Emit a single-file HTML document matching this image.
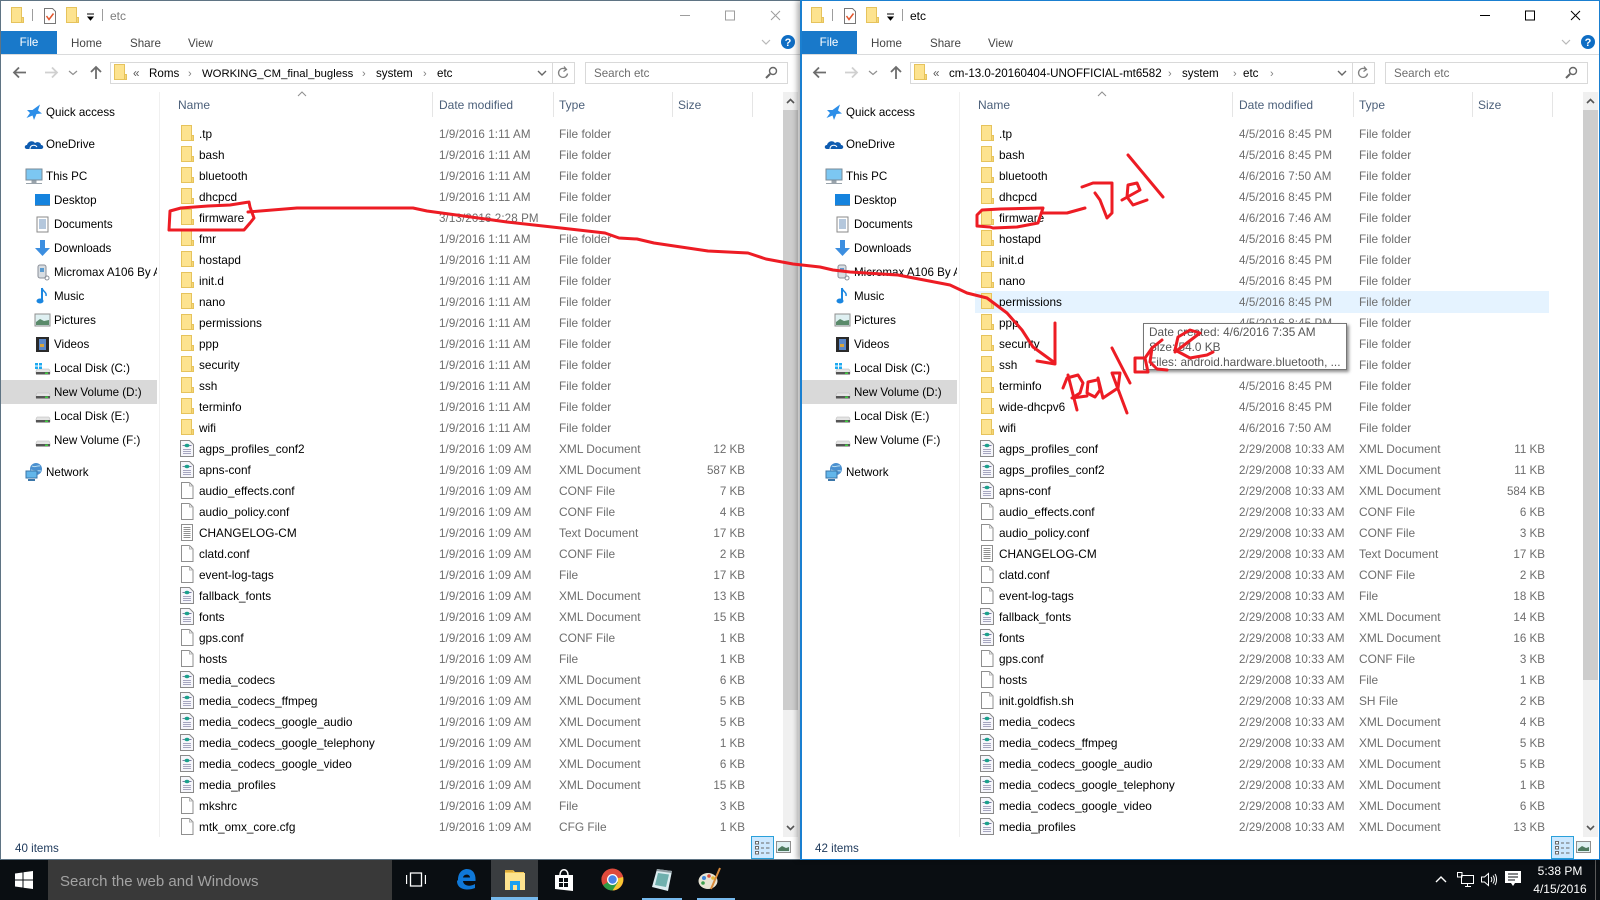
<!DOCTYPE html>
<html><head><meta charset="utf-8"><title>etc</title>
<style>
html,body{margin:0;padding:0;width:1600px;height:900px;overflow:hidden;background:#0a0e12}
body{font-family:"Liberation Sans",sans-serif;font-size:11.6px;color:#000;position:relative}
.win{position:absolute;top:0;width:800px;height:860px;background:#fff;overflow:hidden;box-sizing:border-box;z-index:1}
#L{left:0;border:1px solid #5f7484;border-right:0}
#R{left:800px;border:1px solid #1a7fd0;border-left-width:2px;box-shadow:-3px 0 5px rgba(0,0,0,.3)}
.in{position:absolute;left:-1px;top:-1px;width:800px;height:860px}
#R .in{left:-2px}
.a{position:absolute;white-space:nowrap;line-height:16px}
svg.a{display:block;overflow:visible}
.tab{top:36px}
.file{position:absolute;left:1px;top:31px;width:56px;height:23px;background:#1979ca;color:#fff;text-align:center;line-height:24px}
.rib{position:absolute;left:0;top:54px;width:800px;height:1px;background:#dadbdc}
.box{position:absolute;top:62px;height:20px;border:1px solid #d9d9d9;background:#fff}
.crumb{top:66px}
.sep{color:#808080;font-size:11px}
.hd{top:97px;color:#4c607a;font-size:12px}
.vl{position:absolute;top:92px;height:25px;width:1px;background:#e5e5e5}
.list{position:absolute;left:160px;top:125px;width:620px}
.r{position:relative;height:21px;line-height:20px;white-space:nowrap}
.r svg{position:absolute;left:19px;top:0;width:16px;height:17px}
.r span{position:absolute;top:0}
.nm{left:39px;font-size:11.8px}
.dt{left:279px;color:#6d6d6d;letter-spacing:.1px}
.ty{left:399px;color:#6d6d6d;font-size:11.9px}
.r .nm,.r .ty{top:-1px}
.sz{left:500px;width:85px;text-align:right;color:#6d6d6d}
.nav{position:absolute;left:1px;width:156px;height:24px;line-height:24px;white-space:nowrap;overflow:hidden}
.nav svg{position:absolute;top:2px;width:20px;height:20px}
.nav b{font-weight:normal;position:absolute;top:1px}
.t1 svg{left:23px}.t1 b{left:45px}
.t2 svg{left:31px}.t2 b{left:53px}
.sb{position:absolute;left:783px;top:92px;width:15px;height:745px;background:#f0f0f0}
.th{position:absolute;left:0;top:18px;width:15px;background:#cdcdcd}
.st{position:absolute;left:15px;top:841px;color:#1e395b;line-height:16px}
.vw{position:absolute;left:751px;top:836px;width:21px;height:21px;background:#cce8ff;border:1px solid #2aa0da}
#tb{position:absolute;left:0;top:859px;width:1600px;height:41px;background:#0a0e12}
#tb svg{position:absolute}
.srch{position:absolute;left:48px;top:0;width:344px;height:41px;background:#393939;color:#a3a3a3;font-size:15px;line-height:45px;padding-left:12px;box-sizing:border-box}
.tip{position:absolute;left:1143px;top:323px;width:204px;height:47px;background:#fff;border:1px solid #767676;box-shadow:2px 2px 3px rgba(0,0,0,.45);color:#575757;line-height:15px;padding:1px 0 0 5px;box-sizing:border-box;white-space:nowrap;overflow:hidden;z-index:2;font-size:11.8px}
#ink{position:absolute;left:0;top:0;width:1600px;height:900px;pointer-events:none;z-index:3}
#ink polyline{fill:none;stroke:#ed1c24;stroke-width:3;stroke-linejoin:round;stroke-linecap:round}
</style></head><body>
<svg width="0" height="0" style="position:absolute">
<defs>
<symbol id="f" viewBox="0 0 16 17"><path d="M2.500.5H12.500V15.500H2.500Z" fill="#fde38f" stroke="#e6c35c"/><path d="M12.500 10.500H14.500V15.500H12.500Z" fill="#f6d677" stroke="#e6c35c"/></symbol>
<symbol id="x" viewBox="0 0 16 17"><path d="M1.500.5H10.500L14.500 4.500V16.500H1.500Z" fill="#f6f6fb" stroke="#8a8a8a"/><path d="M3.500 5.500H5.500M10.500 5.500H12.500" stroke="#7a7aa0"/><ellipse cx="8" cy="5.500" rx="2.500" ry="1.800" fill="#1aa08c"/><path d="M4 9.500H12M4 11.500H12M4 13.500H12" stroke="#a6a6c0"/></symbol>
<symbol id="p" viewBox="0 0 16 17"><path d="M2.500.5H10.500L14 4V16.500H2.500Z" fill="#fff" stroke="#8f8f8f"/><path d="M10.500.5V4H14" fill="none" stroke="#b5b5b5"/></symbol>
<symbol id="t" viewBox="0 0 16 17"><path d="M2.500.5H13.500V16.500H2.500Z" fill="#fff" stroke="#8f8f8f"/><path d="M4.500 3.500H11.500M4.500 5.500H11.500M4.500 7.500H11.500M4.500 9.500H11.500M4.500 11.500H11.500M4.500 13.500H11.500" stroke="#8f8f8f"/></symbol>
<symbol id="star" viewBox="0 0 20 20"><path d="M16 2.500 14 8.500 18 11.500 12.500 12 10 18 8.500 13.500 2.500 16 6 11 3 8 8.500 8Z" fill="#2c8ee8"/></symbol>
<symbol id="cloud" viewBox="0 0 20 20"><path d="M3 15C0 15 0 11 3 11 4 7 9 6 11 9 14 7 17 9 17 11 20 11 20 15 17 15Z" fill="#0f5cb0"/><path d="M6 15C6 11 11 10 13 13" stroke="#fff" fill="none"/></symbol>
<symbol id="pc" viewBox="0 0 20 20"><rect x="2" y="3" width="16" height="11" fill="#7cc7f2" stroke="#7a8a96"/><path d="M8 15H12V17H8ZM2 17.500H18" stroke="#9aa4ac" fill="#9aa4ac"/></symbol>
<symbol id="desk" viewBox="0 0 20 20"><rect x="3" y="4" width="15" height="11" fill="#1583de"/><path d="M3 15.500H18" stroke="#7a8a96"/></symbol>
<symbol id="doc" viewBox="0 0 20 20"><rect x="5" y="3" width="11" height="15" fill="#fff" stroke="#8a8a8a"/><path d="M7 6H14M7 8H14M7 10H14M7 12H14M7 14H14" stroke="#6a8fb8"/></symbol>
<symbol id="dl" viewBox="0 0 20 20"><path d="M8 2H13V10H18L10.500 18 3 10H8Z" fill="#3c8ee0"/></symbol>
<symbol id="ph" viewBox="0 0 20 20"><rect x="6" y="3" width="8" height="13" rx="2" fill="#d8dde2" stroke="#8a8f98"/><rect x="8" y="6" width="4" height="4" fill="#5a9bd0"/><circle cx="15" cy="16" r="2" fill="none" stroke="#8a8f98"/></symbol>
<symbol id="mus" viewBox="0 0 20 20"><path d="M10 2V14" stroke="#1a86e0" stroke-width="2"/><path d="M10 2C11 6 15 6 14 10" stroke="#1a86e0" fill="none" stroke-width="1.500"/><ellipse cx="8" cy="15" rx="3.500" ry="2.500" fill="#1a86e0"/></symbol>
<symbol id="pic" viewBox="0 0 20 20"><rect x="3" y="4" width="15" height="12" fill="#dff0f2" stroke="#8f8f8f"/><path d="M4 12 8 9 12 11 17 10V15H4Z" fill="#5a8a6a"/></symbol>
<symbol id="vid" viewBox="0 0 20 20"><rect x="4" y="3" width="13" height="15" fill="#2a2a2a"/><rect x="7" y="5" width="7" height="11" fill="#5a88c8"/><rect x="8" y="10" width="4" height="3" fill="#d9a53a"/></symbol>
<symbol id="drv" viewBox="0 0 20 20"><path d="M5 11H17L18 13V16H4V13Z" fill="#e4e4e4" stroke="#b5b5b5" stroke-width=".5"/><rect x="4" y="14" width="14" height="2.500" fill="#555"/><rect x="13" y="14.500" width="3" height="1.500" fill="#3ecf3e"/></symbol>
<symbol id="drw" viewBox="0 0 20 20"><use href="#drv"/><path d="M3 5H6V7.500H3ZM7 5H10V7.500H7ZM3 8.500H6V11H3ZM7 8.500H10V11H7Z" fill="#1eaaf0"/></symbol>
<symbol id="net" viewBox="0 0 20 20"><circle cx="12" cy="7" r="6" fill="#4a90d0"/><path d="M8 4C11 6 14 3 16 4M7 8C11 10 14 8 17 9" stroke="#b9dff2" fill="none"/><rect x="2" y="9" width="11" height="7" fill="#62b6ea" stroke="#3a76a8"/><path d="M4 18H11" stroke="#3a76a8" stroke-width="2"/></symbol>
<symbol id="chk" viewBox="0 0 14 17"><path d="M1.500.5H9.500L12.500 3.500V15.500H1.500Z" fill="#fff" stroke="#777"/><path d="M3.500 8 6 11.500 10.500 5.500" fill="none" stroke="#e2552c" stroke-width="1.500"/></symbol>
</defs></svg>

<div class="win" id="L"><div class="in">
<svg class="a" style="left:9px;top:7px" width="16" height="17"><use href="#f"/></svg>
<div class="a" style="left:32px;top:9px;width:1px;height:12px;background:#9d9d9d"></div>
<svg class="a" style="left:43px;top:8px" width="14" height="17"><use href="#chk"/></svg>
<svg class="a" style="left:64px;top:7px" width="16" height="17"><use href="#f"/></svg>
<svg class="a" style="left:87px;top:14px" width="8" height="7"><path d="M0 0H7M1 3H6L3.500 6Z" stroke="#000" fill="#000"/></svg>
<div class="a" style="left:102px;top:9px;width:1px;height:12px;background:#9d9d9d"></div>
<div class="a" style="left:110px;top:8px;color:#7c7c7c;font-size:12px">etc</div>
<svg class="a" style="left:680px;top:10px" width="110" height="12"><path d="M0 5.500H10" stroke="#9d9d9d"/><rect x="45.500" y="1" width="9" height="9" fill="none" stroke="#9d9d9d"/><path d="M91 1 100 10M100 1 91 10" stroke="#9d9d9d"/></svg>
<div class="file">File</div>
<div class="a tab" style="left:71px;color:#444">Home</div><div class="a tab" style="left:130px;color:#444">Share</div><div class="a tab" style="left:188px;color:#444">View</div>
<svg class="a" style="left:761px;top:39px" width="10" height="6"><path d="M1 1 5 5 9 1" fill="none" stroke="#b8b8b8" stroke-width="1.200"/></svg>
<svg class="a" style="left:781px;top:35px" width="14" height="14"><circle cx="7" cy="7" r="7" fill="#0e6dc4"/><text x="7" y="11" font-size="11" font-weight="bold" text-anchor="middle" fill="#fff" font-family="Liberation Sans">?</text></svg>
<div class="rib"></div>
<svg class="a" style="left:13px;top:66px" width="100" height="13"><g fill="none" stroke-width="1.800"><path d="M13 6.500H1M6 1.500 1 6.500 6 11.500" stroke="#6d6d6d"/><path d="M32 6.500H44M39 1.500 44 6.500 39 11.500" stroke="#d0d0d0"/><path d="M56 5 60 8.500 64 5" stroke="#8f8f8f" stroke-width="1.200"/><path d="M83 13V1M78 6 83 1 88 6" stroke="#6d6d6d"/></g></svg>
<div class="box" style="left:110px;width:463px"></div>
<div class="a" style="left:552px;top:63px;width:1px;height:20px;background:#d9d9d9"></div>
<svg class="a" style="left:112px;top:64px" width="16" height="17"><use href="#f"/></svg>
<div class="a crumb" style="left:133px;color:#555">«</div>
<div class="a crumb" style="left:149px">Roms</div><div class="a crumb sep" style="left:188px">›</div>
<div class="a crumb" style="left:202px;font-size:11.3px">WORKING_CM_final_bugless</div><div class="a crumb sep" style="left:362px">›</div>
<div class="a crumb" style="left:376px">system</div><div class="a crumb sep" style="left:423px">›</div>
<div class="a crumb" style="left:437px">etc</div>
<svg class="a" style="left:537px;top:70px" width="10" height="6"><path d="M1 1 5 5 9 1" fill="none" stroke="#666" stroke-width="1.400"/></svg>
<svg class="a" style="left:557px;top:66px" width="12" height="13"><path d="M9.500 4A4.500 4.500 0 1 0 10.500 7.500M7 .5 9.500 3.500 6.500 5.500" fill="none" stroke="#808080" stroke-width="1.300"/></svg>
<div class="box" style="left:585px;width:201px"></div>
<div class="a crumb" style="left:594px;color:#6d6d6d">Search etc</div>
<svg class="a" style="left:765px;top:66px" width="13" height="13"><circle cx="8" cy="5" r="3.500" fill="none" stroke="#666" stroke-width="1.400"/><path d="M5 8 1 12" stroke="#666" stroke-width="2"/></svg>
<div class="a hd" style="left:178px">Name</div><div class="a hd" style="left:439px">Date modified</div><div class="a hd" style="left:559px">Type</div><div class="a hd" style="left:678px">Size</div>
<svg class="a" style="left:297px;top:91px" width="10" height="6"><path d="M1 5 5 1 9 5" fill="none" stroke="#8f8f8f"/></svg>
<div class="vl" style="left:432px"></div><div class="vl" style="left:553px"></div><div class="vl" style="left:672px"></div><div class="vl" style="left:752px"></div>
<div style="position:absolute;left:159px;top:92px;width:1px;height:745px;background:#f0f0f0"></div>
<div style="position:absolute;left:1px;top:380px;width:156px;height:24px;background:#d9d9d9"></div>
<div class="nav t1" style="top:100px"><svg><use href="#star"/></svg><b>Quick access</b></div>
<div class="nav t1" style="top:132px"><svg><use href="#cloud"/></svg><b>OneDrive</b></div>
<div class="nav t1" style="top:164px"><svg><use href="#pc"/></svg><b>This PC</b></div>
<div class="nav t2" style="top:188px"><svg><use href="#desk"/></svg><b>Desktop</b></div>
<div class="nav t2" style="top:212px"><svg><use href="#doc"/></svg><b>Documents</b></div>
<div class="nav t2" style="top:236px"><svg><use href="#dl"/></svg><b>Downloads</b></div>
<div class="nav t2" style="top:260px"><svg><use href="#ph"/></svg><b>Micromax A106 By A</b></div>
<div class="nav t2" style="top:284px"><svg><use href="#mus"/></svg><b>Music</b></div>
<div class="nav t2" style="top:308px"><svg><use href="#pic"/></svg><b>Pictures</b></div>
<div class="nav t2" style="top:332px"><svg><use href="#vid"/></svg><b>Videos</b></div>
<div class="nav t2" style="top:356px"><svg><use href="#drw"/></svg><b>Local Disk (C:)</b></div>
<div class="nav t2" style="top:380px"><svg><use href="#drv"/></svg><b>New Volume (D:)</b></div>
<div class="nav t2" style="top:404px"><svg><use href="#drv"/></svg><b>Local Disk (E:)</b></div>
<div class="nav t2" style="top:428px"><svg><use href="#drv"/></svg><b>New Volume (F:)</b></div>
<div class="nav t1" style="top:460px"><svg><use href="#net"/></svg><b>Network</b></div>
<div class="list">
<div class="r"><svg><use href="#f"/></svg><span class="nm">.tp</span><span class="dt">1/9/2016 1:11 AM</span><span class="ty">File folder</span></div>
<div class="r"><svg><use href="#f"/></svg><span class="nm">bash</span><span class="dt">1/9/2016 1:11 AM</span><span class="ty">File folder</span></div>
<div class="r"><svg><use href="#f"/></svg><span class="nm">bluetooth</span><span class="dt">1/9/2016 1:11 AM</span><span class="ty">File folder</span></div>
<div class="r"><svg><use href="#f"/></svg><span class="nm">dhcpcd</span><span class="dt">1/9/2016 1:11 AM</span><span class="ty">File folder</span></div>
<div class="r"><svg><use href="#f"/></svg><span class="nm">firmware</span><span class="dt">3/13/2016 2:28 PM</span><span class="ty">File folder</span></div>
<div class="r"><svg><use href="#f"/></svg><span class="nm">fmr</span><span class="dt">1/9/2016 1:11 AM</span><span class="ty">File folder</span></div>
<div class="r"><svg><use href="#f"/></svg><span class="nm">hostapd</span><span class="dt">1/9/2016 1:11 AM</span><span class="ty">File folder</span></div>
<div class="r"><svg><use href="#f"/></svg><span class="nm">init.d</span><span class="dt">1/9/2016 1:11 AM</span><span class="ty">File folder</span></div>
<div class="r"><svg><use href="#f"/></svg><span class="nm">nano</span><span class="dt">1/9/2016 1:11 AM</span><span class="ty">File folder</span></div>
<div class="r"><svg><use href="#f"/></svg><span class="nm">permissions</span><span class="dt">1/9/2016 1:11 AM</span><span class="ty">File folder</span></div>
<div class="r"><svg><use href="#f"/></svg><span class="nm">ppp</span><span class="dt">1/9/2016 1:11 AM</span><span class="ty">File folder</span></div>
<div class="r"><svg><use href="#f"/></svg><span class="nm">security</span><span class="dt">1/9/2016 1:11 AM</span><span class="ty">File folder</span></div>
<div class="r"><svg><use href="#f"/></svg><span class="nm">ssh</span><span class="dt">1/9/2016 1:11 AM</span><span class="ty">File folder</span></div>
<div class="r"><svg><use href="#f"/></svg><span class="nm">terminfo</span><span class="dt">1/9/2016 1:11 AM</span><span class="ty">File folder</span></div>
<div class="r"><svg><use href="#f"/></svg><span class="nm">wifi</span><span class="dt">1/9/2016 1:11 AM</span><span class="ty">File folder</span></div>
<div class="r"><svg><use href="#x"/></svg><span class="nm">agps_profiles_conf2</span><span class="dt">1/9/2016 1:09 AM</span><span class="ty">XML Document</span><span class="sz">12 KB</span></div>
<div class="r"><svg><use href="#x"/></svg><span class="nm">apns-conf</span><span class="dt">1/9/2016 1:09 AM</span><span class="ty">XML Document</span><span class="sz">587 KB</span></div>
<div class="r"><svg><use href="#p"/></svg><span class="nm">audio_effects.conf</span><span class="dt">1/9/2016 1:09 AM</span><span class="ty">CONF File</span><span class="sz">7 KB</span></div>
<div class="r"><svg><use href="#p"/></svg><span class="nm">audio_policy.conf</span><span class="dt">1/9/2016 1:09 AM</span><span class="ty">CONF File</span><span class="sz">4 KB</span></div>
<div class="r"><svg><use href="#t"/></svg><span class="nm">CHANGELOG-CM</span><span class="dt">1/9/2016 1:09 AM</span><span class="ty">Text Document</span><span class="sz">17 KB</span></div>
<div class="r"><svg><use href="#p"/></svg><span class="nm">clatd.conf</span><span class="dt">1/9/2016 1:09 AM</span><span class="ty">CONF File</span><span class="sz">2 KB</span></div>
<div class="r"><svg><use href="#p"/></svg><span class="nm">event-log-tags</span><span class="dt">1/9/2016 1:09 AM</span><span class="ty">File</span><span class="sz">17 KB</span></div>
<div class="r"><svg><use href="#x"/></svg><span class="nm">fallback_fonts</span><span class="dt">1/9/2016 1:09 AM</span><span class="ty">XML Document</span><span class="sz">13 KB</span></div>
<div class="r"><svg><use href="#x"/></svg><span class="nm">fonts</span><span class="dt">1/9/2016 1:09 AM</span><span class="ty">XML Document</span><span class="sz">15 KB</span></div>
<div class="r"><svg><use href="#p"/></svg><span class="nm">gps.conf</span><span class="dt">1/9/2016 1:09 AM</span><span class="ty">CONF File</span><span class="sz">1 KB</span></div>
<div class="r"><svg><use href="#p"/></svg><span class="nm">hosts</span><span class="dt">1/9/2016 1:09 AM</span><span class="ty">File</span><span class="sz">1 KB</span></div>
<div class="r"><svg><use href="#x"/></svg><span class="nm">media_codecs</span><span class="dt">1/9/2016 1:09 AM</span><span class="ty">XML Document</span><span class="sz">6 KB</span></div>
<div class="r"><svg><use href="#x"/></svg><span class="nm">media_codecs_ffmpeg</span><span class="dt">1/9/2016 1:09 AM</span><span class="ty">XML Document</span><span class="sz">5 KB</span></div>
<div class="r"><svg><use href="#x"/></svg><span class="nm">media_codecs_google_audio</span><span class="dt">1/9/2016 1:09 AM</span><span class="ty">XML Document</span><span class="sz">5 KB</span></div>
<div class="r"><svg><use href="#x"/></svg><span class="nm">media_codecs_google_telephony</span><span class="dt">1/9/2016 1:09 AM</span><span class="ty">XML Document</span><span class="sz">1 KB</span></div>
<div class="r"><svg><use href="#x"/></svg><span class="nm">media_codecs_google_video</span><span class="dt">1/9/2016 1:09 AM</span><span class="ty">XML Document</span><span class="sz">6 KB</span></div>
<div class="r"><svg><use href="#x"/></svg><span class="nm">media_profiles</span><span class="dt">1/9/2016 1:09 AM</span><span class="ty">XML Document</span><span class="sz">15 KB</span></div>
<div class="r"><svg><use href="#p"/></svg><span class="nm">mkshrc</span><span class="dt">1/9/2016 1:09 AM</span><span class="ty">File</span><span class="sz">3 KB</span></div>
<div class="r"><svg><use href="#p"/></svg><span class="nm">mtk_omx_core.cfg</span><span class="dt">1/9/2016 1:09 AM</span><span class="ty">CFG File</span><span class="sz">1 KB</span></div>
</div>
<div class="sb"><svg class="a" style="left:3px;top:6px" width="9" height="6"><path d="M1 5 4.500 1.500 8 5" fill="none" stroke="#555" stroke-width="1.600"/></svg><div class="th" style="height:600px"></div><svg class="a" style="left:3px;top:733px" width="9" height="6"><path d="M1 1 4.500 4.500 8 1" fill="none" stroke="#555" stroke-width="1.600"/></svg></div>
<div class="st">40 items</div>
<div class="vw"><svg class="a" style="left:3px;top:3px" width="15" height="15"><path d="M.5 1.500H3.500V4H.5ZM.5 6.500H3.500V9H.5ZM.5 11.500H3.500V14H.5ZM6 3H9M11 3H14.500M6 8H9M11 8H14.500M6 13H9M11 13H14.500" fill="#fff" stroke="#6a6a6a"/></svg></div>
<svg class="a" style="left:776px;top:841px" width="15" height="12"><rect x=".5" y=".5" width="14" height="11" fill="#dff0f2" stroke="#8f8f8f"/><path d="M2 8 6 5 10 7 13 6V10H2Z" fill="#4d7a5f"/></svg>
</div></div>

<div class="win" id="R"><div class="in">
<svg class="a" style="left:9px;top:7px" width="16" height="17"><use href="#f"/></svg>
<div class="a" style="left:32px;top:9px;width:1px;height:12px;background:#9d9d9d"></div>
<svg class="a" style="left:43px;top:8px" width="14" height="17"><use href="#chk"/></svg>
<svg class="a" style="left:64px;top:7px" width="16" height="17"><use href="#f"/></svg>
<svg class="a" style="left:87px;top:14px" width="8" height="7"><path d="M0 0H7M1 3H6L3.500 6Z" stroke="#000" fill="#000"/></svg>
<div class="a" style="left:102px;top:9px;width:1px;height:12px;background:#9d9d9d"></div>
<div class="a" style="left:110px;top:8px;color:#000;font-size:12px">etc</div>
<svg class="a" style="left:680px;top:10px" width="110" height="12"><path d="M0 5.500H10" stroke="#000"/><rect x="45.500" y="1" width="9" height="9" fill="none" stroke="#000"/><path d="M91 1 100 10M100 1 91 10" stroke="#000"/></svg>
<div class="file">File</div>
<div class="a tab" style="left:71px;color:#444">Home</div><div class="a tab" style="left:130px;color:#444">Share</div><div class="a tab" style="left:188px;color:#444">View</div>
<svg class="a" style="left:761px;top:39px" width="10" height="6"><path d="M1 1 5 5 9 1" fill="none" stroke="#b8b8b8" stroke-width="1.200"/></svg>
<svg class="a" style="left:781px;top:35px" width="14" height="14"><circle cx="7" cy="7" r="7" fill="#0e6dc4"/><text x="7" y="11" font-size="11" font-weight="bold" text-anchor="middle" fill="#fff" font-family="Liberation Sans">?</text></svg>
<div class="rib"></div>
<svg class="a" style="left:13px;top:66px" width="100" height="13"><g fill="none" stroke-width="1.800"><path d="M13 6.500H1M6 1.500 1 6.500 6 11.500" stroke="#6d6d6d"/><path d="M32 6.500H44M39 1.500 44 6.500 39 11.500" stroke="#d0d0d0"/><path d="M56 5 60 8.500 64 5" stroke="#8f8f8f" stroke-width="1.200"/><path d="M83 13V1M78 6 83 1 88 6" stroke="#6d6d6d"/></g></svg>
<div class="box" style="left:110px;width:463px"></div>
<div class="a" style="left:552px;top:63px;width:1px;height:20px;background:#d9d9d9"></div>
<svg class="a" style="left:112px;top:64px" width="16" height="17"><use href="#f"/></svg>
<div class="a crumb" style="left:133px;color:#555">«</div>
<div class="a crumb" style="left:149px">cm-13.0-20160404-UNOFFICIAL-mt6582</div><div class="a crumb sep" style="left:368px">›</div>
<div class="a crumb" style="left:382px">system</div><div class="a crumb sep" style="left:433px">›</div>
<div class="a crumb" style="left:443px">etc</div><div class="a crumb sep" style="left:470px">›</div>
<svg class="a" style="left:537px;top:70px" width="10" height="6"><path d="M1 1 5 5 9 1" fill="none" stroke="#666" stroke-width="1.400"/></svg>
<svg class="a" style="left:557px;top:66px" width="12" height="13"><path d="M9.500 4A4.500 4.500 0 1 0 10.500 7.500M7 .5 9.500 3.500 6.500 5.500" fill="none" stroke="#808080" stroke-width="1.300"/></svg>
<div class="box" style="left:585px;width:201px"></div>
<div class="a crumb" style="left:594px;color:#6d6d6d">Search etc</div>
<svg class="a" style="left:765px;top:66px" width="13" height="13"><circle cx="8" cy="5" r="3.500" fill="none" stroke="#666" stroke-width="1.400"/><path d="M5 8 1 12" stroke="#666" stroke-width="2"/></svg>
<div class="a hd" style="left:178px">Name</div><div class="a hd" style="left:439px">Date modified</div><div class="a hd" style="left:559px">Type</div><div class="a hd" style="left:678px">Size</div>
<svg class="a" style="left:297px;top:91px" width="10" height="6"><path d="M1 5 5 1 9 5" fill="none" stroke="#8f8f8f"/></svg>
<div class="vl" style="left:432px"></div><div class="vl" style="left:553px"></div><div class="vl" style="left:672px"></div><div class="vl" style="left:752px"></div>
<div style="position:absolute;left:159px;top:92px;width:1px;height:745px;background:#f0f0f0"></div>
<div style="position:absolute;left:1px;top:380px;width:156px;height:24px;background:#d9d9d9"></div>
<div style="position:absolute;left:175px;top:291px;width:574px;height:22px;background:#e5f3ff"></div>
<div class="nav t1" style="top:100px"><svg><use href="#star"/></svg><b>Quick access</b></div>
<div class="nav t1" style="top:132px"><svg><use href="#cloud"/></svg><b>OneDrive</b></div>
<div class="nav t1" style="top:164px"><svg><use href="#pc"/></svg><b>This PC</b></div>
<div class="nav t2" style="top:188px"><svg><use href="#desk"/></svg><b>Desktop</b></div>
<div class="nav t2" style="top:212px"><svg><use href="#doc"/></svg><b>Documents</b></div>
<div class="nav t2" style="top:236px"><svg><use href="#dl"/></svg><b>Downloads</b></div>
<div class="nav t2" style="top:260px"><svg><use href="#ph"/></svg><b>Micromax A106 By A</b></div>
<div class="nav t2" style="top:284px"><svg><use href="#mus"/></svg><b>Music</b></div>
<div class="nav t2" style="top:308px"><svg><use href="#pic"/></svg><b>Pictures</b></div>
<div class="nav t2" style="top:332px"><svg><use href="#vid"/></svg><b>Videos</b></div>
<div class="nav t2" style="top:356px"><svg><use href="#drw"/></svg><b>Local Disk (C:)</b></div>
<div class="nav t2" style="top:380px"><svg><use href="#drv"/></svg><b>New Volume (D:)</b></div>
<div class="nav t2" style="top:404px"><svg><use href="#drv"/></svg><b>Local Disk (E:)</b></div>
<div class="nav t2" style="top:428px"><svg><use href="#drv"/></svg><b>New Volume (F:)</b></div>
<div class="nav t1" style="top:460px"><svg><use href="#net"/></svg><b>Network</b></div>
<div class="list">
<div class="r"><svg><use href="#f"/></svg><span class="nm">.tp</span><span class="dt">4/5/2016 8:45 PM</span><span class="ty">File folder</span></div>
<div class="r"><svg><use href="#f"/></svg><span class="nm">bash</span><span class="dt">4/5/2016 8:45 PM</span><span class="ty">File folder</span></div>
<div class="r"><svg><use href="#f"/></svg><span class="nm">bluetooth</span><span class="dt">4/6/2016 7:50 AM</span><span class="ty">File folder</span></div>
<div class="r"><svg><use href="#f"/></svg><span class="nm">dhcpcd</span><span class="dt">4/5/2016 8:45 PM</span><span class="ty">File folder</span></div>
<div class="r"><svg><use href="#f"/></svg><span class="nm">firmware</span><span class="dt">4/6/2016 7:46 AM</span><span class="ty">File folder</span></div>
<div class="r"><svg><use href="#f"/></svg><span class="nm">hostapd</span><span class="dt">4/5/2016 8:45 PM</span><span class="ty">File folder</span></div>
<div class="r"><svg><use href="#f"/></svg><span class="nm">init.d</span><span class="dt">4/5/2016 8:45 PM</span><span class="ty">File folder</span></div>
<div class="r"><svg><use href="#f"/></svg><span class="nm">nano</span><span class="dt">4/5/2016 8:45 PM</span><span class="ty">File folder</span></div>
<div class="r"><svg><use href="#f"/></svg><span class="nm">permissions</span><span class="dt">4/5/2016 8:45 PM</span><span class="ty">File folder</span></div>
<div class="r"><svg><use href="#f"/></svg><span class="nm">ppp</span><span class="dt">4/5/2016 8:45 PM</span><span class="ty">File folder</span></div>
<div class="r"><svg><use href="#f"/></svg><span class="nm">security</span><span class="dt">4/5/2016 8:45 PM</span><span class="ty">File folder</span></div>
<div class="r"><svg><use href="#f"/></svg><span class="nm">ssh</span><span class="dt">4/5/2016 8:45 PM</span><span class="ty">File folder</span></div>
<div class="r"><svg><use href="#f"/></svg><span class="nm">terminfo</span><span class="dt">4/5/2016 8:45 PM</span><span class="ty">File folder</span></div>
<div class="r"><svg><use href="#f"/></svg><span class="nm">wide-dhcpv6</span><span class="dt">4/5/2016 8:45 PM</span><span class="ty">File folder</span></div>
<div class="r"><svg><use href="#f"/></svg><span class="nm">wifi</span><span class="dt">4/6/2016 7:50 AM</span><span class="ty">File folder</span></div>
<div class="r"><svg><use href="#x"/></svg><span class="nm">agps_profiles_conf</span><span class="dt">2/29/2008 10:33 AM</span><span class="ty">XML Document</span><span class="sz">11 KB</span></div>
<div class="r"><svg><use href="#x"/></svg><span class="nm">agps_profiles_conf2</span><span class="dt">2/29/2008 10:33 AM</span><span class="ty">XML Document</span><span class="sz">11 KB</span></div>
<div class="r"><svg><use href="#x"/></svg><span class="nm">apns-conf</span><span class="dt">2/29/2008 10:33 AM</span><span class="ty">XML Document</span><span class="sz">584 KB</span></div>
<div class="r"><svg><use href="#p"/></svg><span class="nm">audio_effects.conf</span><span class="dt">2/29/2008 10:33 AM</span><span class="ty">CONF File</span><span class="sz">6 KB</span></div>
<div class="r"><svg><use href="#p"/></svg><span class="nm">audio_policy.conf</span><span class="dt">2/29/2008 10:33 AM</span><span class="ty">CONF File</span><span class="sz">3 KB</span></div>
<div class="r"><svg><use href="#t"/></svg><span class="nm">CHANGELOG-CM</span><span class="dt">2/29/2008 10:33 AM</span><span class="ty">Text Document</span><span class="sz">17 KB</span></div>
<div class="r"><svg><use href="#p"/></svg><span class="nm">clatd.conf</span><span class="dt">2/29/2008 10:33 AM</span><span class="ty">CONF File</span><span class="sz">2 KB</span></div>
<div class="r"><svg><use href="#p"/></svg><span class="nm">event-log-tags</span><span class="dt">2/29/2008 10:33 AM</span><span class="ty">File</span><span class="sz">18 KB</span></div>
<div class="r"><svg><use href="#x"/></svg><span class="nm">fallback_fonts</span><span class="dt">2/29/2008 10:33 AM</span><span class="ty">XML Document</span><span class="sz">14 KB</span></div>
<div class="r"><svg><use href="#x"/></svg><span class="nm">fonts</span><span class="dt">2/29/2008 10:33 AM</span><span class="ty">XML Document</span><span class="sz">16 KB</span></div>
<div class="r"><svg><use href="#p"/></svg><span class="nm">gps.conf</span><span class="dt">2/29/2008 10:33 AM</span><span class="ty">CONF File</span><span class="sz">3 KB</span></div>
<div class="r"><svg><use href="#p"/></svg><span class="nm">hosts</span><span class="dt">2/29/2008 10:33 AM</span><span class="ty">File</span><span class="sz">1 KB</span></div>
<div class="r"><svg><use href="#p"/></svg><span class="nm">init.goldfish.sh</span><span class="dt">2/29/2008 10:33 AM</span><span class="ty">SH File</span><span class="sz">2 KB</span></div>
<div class="r"><svg><use href="#x"/></svg><span class="nm">media_codecs</span><span class="dt">2/29/2008 10:33 AM</span><span class="ty">XML Document</span><span class="sz">4 KB</span></div>
<div class="r"><svg><use href="#x"/></svg><span class="nm">media_codecs_ffmpeg</span><span class="dt">2/29/2008 10:33 AM</span><span class="ty">XML Document</span><span class="sz">5 KB</span></div>
<div class="r"><svg><use href="#x"/></svg><span class="nm">media_codecs_google_audio</span><span class="dt">2/29/2008 10:33 AM</span><span class="ty">XML Document</span><span class="sz">5 KB</span></div>
<div class="r"><svg><use href="#x"/></svg><span class="nm">media_codecs_google_telephony</span><span class="dt">2/29/2008 10:33 AM</span><span class="ty">XML Document</span><span class="sz">1 KB</span></div>
<div class="r"><svg><use href="#x"/></svg><span class="nm">media_codecs_google_video</span><span class="dt">2/29/2008 10:33 AM</span><span class="ty">XML Document</span><span class="sz">6 KB</span></div>
<div class="r"><svg><use href="#x"/></svg><span class="nm">media_profiles</span><span class="dt">2/29/2008 10:33 AM</span><span class="ty">XML Document</span><span class="sz">13 KB</span></div>
</div>
<div class="sb"><svg class="a" style="left:3px;top:6px" width="9" height="6"><path d="M1 5 4.500 1.500 8 5" fill="none" stroke="#555" stroke-width="1.600"/></svg><div class="th" style="height:570px"></div><svg class="a" style="left:3px;top:733px" width="9" height="6"><path d="M1 1 4.500 4.500 8 1" fill="none" stroke="#555" stroke-width="1.600"/></svg></div>
<div class="st">42 items</div>
<div class="vw"><svg class="a" style="left:3px;top:3px" width="15" height="15"><path d="M.5 1.500H3.500V4H.5ZM.5 6.500H3.500V9H.5ZM.5 11.500H3.500V14H.5ZM6 3H9M11 3H14.500M6 8H9M11 8H14.500M6 13H9M11 13H14.500" fill="#fff" stroke="#6a6a6a"/></svg></div>
<svg class="a" style="left:776px;top:841px" width="15" height="12"><rect x=".5" y=".5" width="14" height="11" fill="#dff0f2" stroke="#8f8f8f"/><path d="M2 8 6 5 10 7 13 6V10H2Z" fill="#4d7a5f"/></svg>
</div></div>

<div class="tip">Date created: 4/6/2016 7:35 AM<br>Size: 54.0 KB<br>Files: android.hardware.bluetooth, ...</div>

<div id="tb">
<svg style="left:15px;top:12px" width="18" height="18"><path d="M0 2.500 7.500 1.500V8.500H0ZM8.500 1.300 18 0V8.500H8.500ZM0 9.500H7.500V16.500L0 15.500ZM8.500 9.500H18V18L8.500 16.700Z" fill="#fff"/></svg>
<div class="srch">Search the web and Windows</div>
<svg style="left:406px;top:11px" width="20" height="19"><path d="M4.500 3H15.500V16H4.500Z" fill="none" stroke="#fff" stroke-width="1.300"/><path d="M.5 5V14M19.500 5V14" stroke="#fff" stroke-width="1.300"/></svg>
<svg style="left:455px;top:8px" width="22" height="24"><path d="M3 13C3 5 8 2 12 2 18 2 21 7 20.500 14H8C8.500 19 15 20 20 17V21C13 24 2 23 2 14ZM8 10.500H15C15 7 9 6.500 8 10.500Z" fill="#0f78d8"/></svg>
<div style="position:absolute;left:491px;top:0;width:47px;height:41px;background:#3a3d40"></div>
<div style="position:absolute;left:491px;top:38px;width:47px;height:3px;background:#76b9ed"></div>
<svg style="left:504px;top:9px" width="22" height="24"><path d="M1 2H9L11 4H20V10H1Z" fill="#f4c752"/><rect x="1" y="5" width="20" height="17" fill="#fde38f"/><path d="M1 2H9V4H1Z" fill="#d9a83a"/><path d="M6 13H16V22H13V17H9V22H6Z" fill="#19a0f0"/></svg>
<svg style="left:554px;top:8px" width="20" height="25"><path d="M1 8H19V24L1 22Z" fill="#fff"/><path d="M6 8C6 1 14 1 14 8" fill="none" stroke="#fff" stroke-width="1.500"/><path d="M5 11H9V15H5ZM10 11H14V15H10ZM5 16H9V20H5ZM10 16H14V20H10Z" fill="#0a0e12"/></svg>
<svg style="left:601px;top:9px" width="23" height="23"><circle cx="11.500" cy="11.500" r="11" fill="#de4a3c"/><path d="M11.500 11.500 2 17A11 11 0 0 0 11.500 22.500Z" fill="#2e9b46"/><path d="M11.500 11.500 2 17A11 11 0 0 1 1 8Z" fill="#de4a3c"/><path d="M11.500 11.500 22 9A11 11 0 0 1 11.500 22.500Z" fill="#f7c632"/><path d="M11.500 22.500 6 14 11.500 11.500 17 14Z" fill="#2e9b46"/><circle cx="11.500" cy="11.500" r="5.500" fill="#fff"/><circle cx="11.500" cy="11.500" r="4.200" fill="#4a84e8"/></svg>
<svg style="left:650px;top:9px" width="24" height="25"><path d="M7 1 22 3 18 23 2 19Z" fill="#dcecf0"/><path d="M8 5 19 6.500 16 19 5 17Z" fill="#6fb0ae"/><path d="M7 1 22 3 21.500 5 6.500 3Z" fill="#8e9aa0"/></svg>
<div style="position:absolute;left:642px;top:39px;width:40px;height:2px;background:#76b9ed"></div>
<svg style="left:698px;top:8px" width="25" height="26"><ellipse cx="10" cy="14" rx="9.500" ry="8" fill="#e8e4d4"/><circle cx="6" cy="11" r="2" fill="#3f86d8"/><circle cx="11" cy="9" r="1.800" fill="#d94f3c"/><circle cx="5" cy="16" r="1.800" fill="#3fa04f"/><circle cx="15" cy="11" r="1.800" fill="#e5b93c"/><path d="M22 1 13 22" stroke="#d8893a" stroke-width="2"/></svg>
<div style="position:absolute;left:697px;top:39px;width:38px;height:2px;background:#76b9ed"></div>
<svg style="left:1435px;top:16px" width="12" height="8"><path d="M1 7 6 2 11 7" fill="none" stroke="#fff" stroke-width="1.400"/></svg>
<svg style="left:1457px;top:13px" width="17" height="15"><path d="M4.500 3.500H16.500V11.500H4.500ZM8 14.500H14M10.500 11.500V14.500M.5.5H5V5H.5Z" fill="#0a0e12" stroke="#fff"/></svg>
<svg style="left:1481px;top:13px" width="16" height="15"><path d="M.5 5H3.500L7.500 1.500V13.500L3.500 10H.5Z" fill="none" stroke="#fff"/><path d="M10 5C11 6.500 11 8.500 10 10M12 3.500C13.700 6 13.700 9 12 11.500M14 2C16 5 16 10 14 13" fill="none" stroke="#fff"/></svg>
<svg style="left:1505px;top:12px" width="16" height="17"><path d="M0 0H16V12H10L8 15 6 12H0Z" fill="#fff"/><path d="M3 3H13M3 6H13M3 9H10" stroke="#0a0e12"/></svg>
<div class="a" style="left:1530px;width:60px;top:3px;text-align:center;color:#fff;font-size:12px;line-height:18px">5:38 PM<br>4/15/2016</div>
<div style="position:absolute;left:1595px;top:0;width:1px;height:41px;background:#5a5a5a"></div>
</div>

<svg id="ink" viewBox="0 0 1600 900">
<polyline points="249,202 230,205 208,206 181,208 170,211 169,230 208,230 244,230 250,223 254,218 250,207 249,202"/>
<polyline points="248,212 297,208 413,208 427,211 471,217 507,222 552,227 605,233 619,238 637,239 654,243 708,251 748,253 766,259 793,264 820,267 833,270 850,272 898,275 950,285 967,293 987,298 1007,313 1022,330 1033,347 1055,363"/>
<polyline points="1055,323 1055,364 1037,361"/>
<polyline points="1043,208 1000,209 982,210 977,215 977,226 990,227 993,228 1017,227 1038,223 1043,208"/>
<polyline points="1043,213 1067,213 1085,208"/>
<polyline points="1082,187 1093,183 1112,183 1112,213 1107,218 1100,200 1095,193"/>
<polyline points="1122,200 1140,190 1137,183 1128,185 1127,197 1133,205 1147,200"/>
<polyline points="1128,155 1163,197"/>
<polyline points="1063,388 1067,378 1078,375 1083,383 1080,393 1072,398 1087,396"/>
<polyline points="1068,375 1077,410"/>
<polyline points="1097,380 1088,382 1087,393 1095,397 1100,390 1098,378 1103,398"/>
<polyline points="1103,398 1118,388 1120,373 1112,373 1127,413"/>
<polyline points="1112,348 1130,383"/>
<polyline points="1145,358 1135,358 1135,372 1148,372 1145,358 1152,348"/>
<polyline points="1162,340 1152,348 1150,362 1157,369 1167,370"/>
<polyline points="1175,352 1200,333 1190,330 1178,337 1175,350 1190,358 1207,355 1213,352"/>
</svg>
</body></html>
